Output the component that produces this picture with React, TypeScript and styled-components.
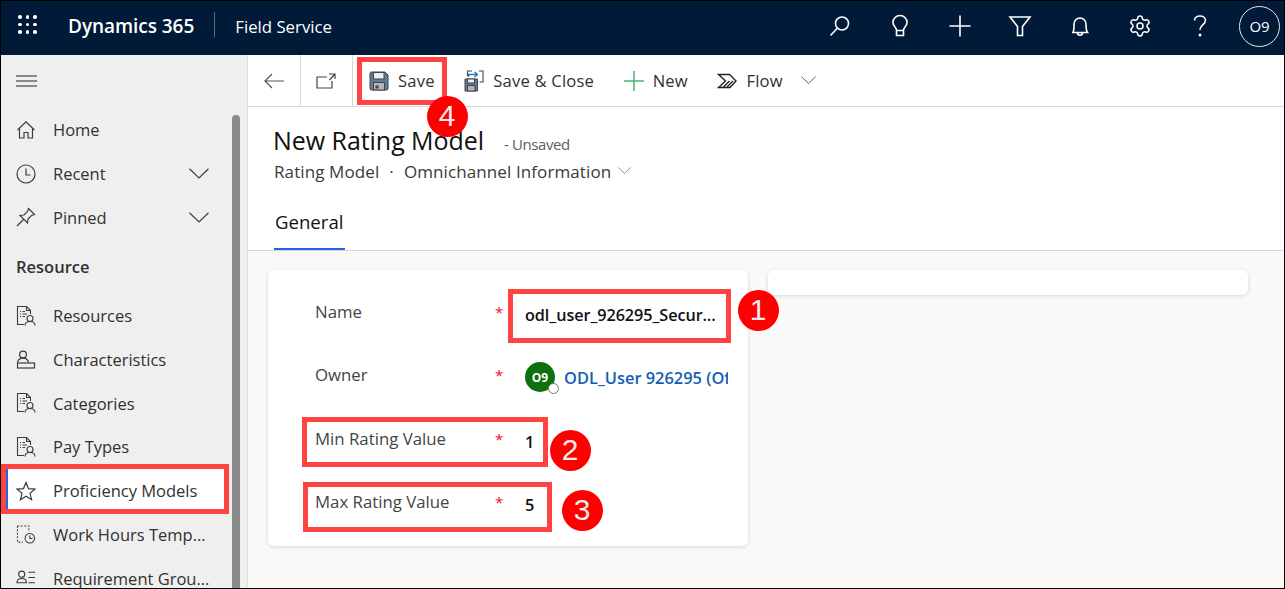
import React from "react";
import styled, { createGlobalStyle } from "styled-components";
import { Settings } from "lucide-react";

const GlobalStyle = createGlobalStyle`
  * { box-sizing: border-box; }
  html, body { margin: 0; padding: 0; background: #fff; }
  body { font-family: "Open Sans", "Noto Sans", sans-serif; overflow: hidden; }
`;

const Frame = styled.div`
  position: relative;
  width: 1285px;
  height: 589px;
  border: 1px solid #000;
  display: flex;
  flex-direction: column;
  overflow: hidden;
  color: #323130;
`;

const TopBar = styled.header`
  height: 54px;
  flex: none;
  padding-bottom: 4px;
  background: #001a38;
  color: #fff;
  display: flex;
  align-items: center;
`;

const Waffle = styled.div`
  width: 19px;
  height: 19px;
  margin: -3px 0 0 17px;
  display: grid;
  grid-template-columns: repeat(3, 3.6px);
  justify-content: space-between;
  align-content: space-between;
  span {
    width: 3.6px;
    height: 3.6px;
    border-radius: 50%;
    background: #fff;
  }
`;

const Brand = styled.div`
  margin-left: 31px;
  font-size: 19px;
  font-weight: 600;
  letter-spacing: -0.05px;
`;

const BrandDivider = styled.div`
  width: 1px;
  height: 25px;
  margin: -4px 20px 0 20px;
  background: #5a6b80;
`;

const AppName = styled.div`
  font-size: 16.8px;
`;

const TopActions = styled.div`
  margin-left: auto;
  margin-right: 4px;
  display: flex;
  align-items: center;
`;

const TopAction = styled.div`
  width: 60px;
  height: 40px;
  display: flex;
  align-items: center;
  justify-content: center;
`;

const UserCircle = styled.div`
  width: 41px;
  height: 41px;
  margin-left: 9px;
  border: 1px solid #e8e8e8;
  border-radius: 50%;
  display: flex;
  align-items: center;
  justify-content: center;
  font-size: 15px;
`;

const Body = styled.div`
  flex: 1;
  display: flex;
  min-height: 0;
`;

const Sidebar = styled.nav`
  position: relative;
  width: 247px;
  flex: none;
  background: #efefef;
  border-right: 1px solid #e1e1e1;
  overflow: hidden;
`;

const Burger = styled.div`
  height: 52px;
  margin-bottom: 1px;
  padding-left: 15px;
  display: flex;
  align-items: center;
`;

const NavRow = styled.div<{ $active?: boolean }>`
  position: relative;
  width: 218px;
  margin-left: 5px;
  height: 43.7px;
  padding-left: 10px;
  display: flex;
  align-items: center;
  font-size: 16.5px;
  white-space: nowrap;
  background: ${({ $active }) => ($active ? "#fff" : "transparent")};
  ${({ $active }) => $active && `box-shadow: inset 2px 0 0 #2266e3;`}
`;

const NavIcon = styled.span`
  width: 20px;
  height: 22px;
  margin-right: 17px;
  flex: none;
  display: flex;
  align-items: center;
  justify-content: center;
`;

const NavChevron = styled.span`
  margin-left: auto;
  margin-right: 15px;
  display: flex;
`;

const GroupTitle = styled.div`
  height: 55px;
  padding-left: 15px;
  display: flex;
  align-items: center;
  font-size: 16.5px;
  font-weight: 600;
`;

const ScrollThumb = styled.div`
  position: absolute;
  top: 60px;
  bottom: -10px;
  left: 231px;
  width: 8px;
  border-radius: 4px 4px 0 0;
  background: #8a8a8a;
`;

const Main = styled.main`
  flex: 1;
  display: flex;
  flex-direction: column;
  min-width: 0;
`;

const Toolbar = styled.div`
  height: 52px;
  flex: none;
  display: flex;
  align-items: stretch;
  border-bottom: 1px solid #d8d8d8;
`;

const NavButton = styled.div`
  width: 52.5px;
  flex: none;
  display: flex;
  align-items: center;
  justify-content: center;
  border-right: 1px solid #d8d8d8;
`;

const Commands = styled.div`
  display: flex;
  align-items: center;
  gap: 29.5px;
  padding-left: 16px;
`;

const Command = styled.div`
  display: flex;
  align-items: center;
  gap: 9px;
  font-size: 16.6px;
  letter-spacing: 0.2px;
  white-space: nowrap;
`;

const CommandCaret = styled.span`
  display: flex;
  margin-left: 9px;
`;

const RecordHeader = styled.div`
  flex: none;
  padding: 16px 0 0 26px;
  border-bottom: 1px solid #d8d8d8;
`;

const TitleLine = styled.div`
  display: flex;
  align-items: baseline;
  height: 34px;
`;

const Title = styled.h1`
  margin: 0 0 0 -1px;
  font-size: 25px;
  line-height: 34px;
  font-weight: 500;
  letter-spacing: -0.05px;
  color: #111;
`;

const TitleState = styled.span`
  margin-left: 20px;
  font-size: 15px;
  letter-spacing: -0.4px;
  color: #605e5c;
`;

const SubLine = styled.div`
  display: flex;
  align-items: center;
  height: 22px;
  margin-top: 3px;
  font-size: 17px;
  font-weight: 500;
  letter-spacing: 0.1px;
  color: #3b3a39;
`;

const Dot = styled.span`
  margin: 0 10px;
`;

const SubCaret = styled.span`
  display: flex;
  margin-left: 7px;
`;

const Tab = styled.div`
  display: block;
  width: 71px;
  margin-top: 20px;
  padding: 7px 1px 13px 1px;
  font-size: 18.6px;
  line-height: 26px;
  font-weight: 500;
  white-space: nowrap;
  color: #111;
  border-bottom: 2px solid #2266e3;
`;

const Workspace = styled.div`
  flex: 1;
  background: #faf9f8;
  padding: 19px 20px;
  display: flex;
  align-items: flex-start;
  gap: 20px;
`;

const Card = styled.section`
  width: 480px;
  background: #fff;
  border-radius: 6px;
  box-shadow: 0 1px 4px rgba(0, 0, 0, 0.14);
`;

const FormCard = styled(Card)`
  height: 276px;
  padding: 30px 20px 0 47px;
`;

const BlankCard = styled(Card)`
  height: 25px;
`;

const FieldRow = styled.div`
  height: 63.4px;
  display: grid;
  grid-template-columns: 180px 30px 203px;
  align-items: start;
`;

const FieldLabel = styled.div`
  font-size: 16.8px;
  line-height: 24px;
  color: #444;
  white-space: nowrap;
`;

const Required = styled.div`
  font-size: 15px;
  line-height: 24px;
  color: #e8112d;
`;

const FieldValue = styled.div`
  margin-top: 3px;
  font-size: 16.2px;
  line-height: 24px;
  font-weight: 600;
  letter-spacing: -0.05px;
  color: #111;
  width: 192px;
  overflow: hidden;
  white-space: nowrap;
  text-overflow: ellipsis;
`;

const OwnerCell = styled.div`
  display: flex;
  align-items: center;
  gap: 9px;
  margin-top: -7px;
  height: 42px;
  overflow: hidden;
  white-space: nowrap;
`;

const Avatar = styled.div`
  position: relative;
  width: 30px;
  height: 30px;
  flex: none;
  border-radius: 50%;
  background: #0e700e;
  color: #fff;
  font-size: 12px;
  font-weight: 700;
  display: flex;
  align-items: center;
  justify-content: center;
`;

const Presence = styled.span`
  position: absolute;
  right: -4px;
  bottom: -2px;
  width: 11px;
  height: 11px;
  border-radius: 50%;
  background: #fff;
  border: 1px solid #777;
`;

const OwnerLink = styled.span`
  font-size: 16.4px;
  font-weight: 600;
  color: #1160b7;
`;

const Callout = styled.div<{ $x: number; $y: number; $w: number; $h: number }>`
  position: absolute;
  left: ${({ $x }) => $x - 1}px;
  top: ${({ $y }) => $y - 1}px;
  width: ${({ $w }) => $w}px;
  height: ${({ $h }) => $h}px;
  border: 5px solid #ff4343;
  pointer-events: none;
`;

const Badge = styled.div<{ $x: number; $y: number }>`
  position: absolute;
  left: ${({ $x }) => $x - 21.5}px;
  top: ${({ $y }) => $y - 21.5}px;
  width: 41px;
  height: 41px;
  border-radius: 50%;
  background: #fe0000;
  color: #ececec;
  font-family: "Liberation Sans", Arial, sans-serif;
  font-size: 30px;
  display: flex;
  align-items: center;
  justify-content: center;
`;

const stroke = "#fff";
const ink = "#3d3c3b";

const TopIcon = ({ children }: { children: React.ReactNode }) => (
  <svg width="24" height="24" viewBox="0 0 24 24" fill="none" stroke={stroke} strokeWidth="1.6">
    {children}
  </svg>
);

const DocUser = () => (
  <svg width="20" height="22" viewBox="0 0 20 22" fill="none" stroke={ink} strokeWidth="1.1">
    <path d="M8 19.5H1.5V1.5H10.5L14.5 5.5V9" />
    <path d="M10.5 1.5V5.5H14.5" />
    <path d="M4 6.5H5M4 9H5M4 11.5H5M6.5 6.5H9M6.5 9H11M6.5 11.5H9" />
    <circle cx="14" cy="13.5" r="3" />
    <path d="M9 20.5C9 17.8 11 16.5 14 16.5S19 17.8 19 20.5" />
  </svg>
);

const Chevron = ({ size = 20, color = ink }: { size?: number; color?: string }) => (
  <svg width={size} height={size * 0.55} viewBox="0 0 20 11" fill="none" stroke={color} strokeWidth="1.2">
    <path d="M0.5 0.8L10 10L19.5 0.8" />
  </svg>
);

const navTop = [
  {
    label: "Home",
    icon: (
      <svg width="20" height="20" viewBox="0 0 20 20" fill="none" stroke={ink} strokeWidth="1.2">
        <path d="M1.5 10L10 1.8L18.5 10M3.5 8.5V18H8V12.5H12V18H16.5V8.5" />
      </svg>
    ),
  },
  {
    label: "Recent",
    chevron: true,
    icon: (
      <svg width="20" height="20" viewBox="0 0 20 20" fill="none" stroke={ink} strokeWidth="1.2">
        <circle cx="10" cy="10" r="9" />
        <path d="M10 4.5V11H14.5" />
      </svg>
    ),
  },
  {
    label: "Pinned",
    chevron: true,
    icon: (
      <svg width="20" height="20" viewBox="0 0 20 20" fill="none" stroke={ink} strokeWidth="1.2">
        <path d="M12.5 1.5L18.5 7.5L15.5 8.5L12 12L11.5 16L4 8.5L8 8L11.5 4.5Z" />
        <path d="M7.5 12.5L1 19" />
      </svg>
    ),
  },
];

const navResource = [
  { label: "Resources", icon: <DocUser /> },
  {
    label: "Characteristics",
    icon: (
      <svg width="20" height="20" viewBox="0 0 20 20" fill="none" stroke={ink} strokeWidth="1.2">
        <circle cx="7" cy="4.5" r="3.4" />
        <path d="M1.5 12.5C2 9.5 4 8.2 7 8.2S12 9.5 12.5 12.5" />
        <rect x="1.5" y="13" width="17" height="5" />
      </svg>
    ),
  },
  { label: "Categories", icon: <DocUser /> },
  { label: "Pay Types", icon: <DocUser /> },
  {
    label: "Proficiency Models",
    active: true,
    icon: (
      <svg width="20" height="20" viewBox="0 0 20 20" fill="none" stroke={ink} strokeWidth="1.2">
        <path d="M10 1.5L12.5 7.6L19 8.1L14 12.3L15.6 18.7L10 15.2L4.4 18.7L6 12.3L1 8.1L7.5 7.6Z" />
      </svg>
    ),
  },
  {
    label: "Work Hours Temp...",
    icon: (
      <svg width="21" height="21" viewBox="0 0 21 21" fill="none" stroke={ink} strokeWidth="1.1">
        <path d="M1.5 1.5H13.5V8M1.5 1.5V18.5H7" strokeDasharray="2 1.6" />
        <circle cx="14.5" cy="14.5" r="5" />
        <path d="M14.5 11.5V14.8H17.5" />
      </svg>
    ),
  },
  {
    label: "Requirement Grou...",
    icon: (
      <svg width="21" height="18" viewBox="0 0 21 18" fill="none" stroke={ink} strokeWidth="1.2">
        <circle cx="6" cy="5" r="3.2" />
        <path d="M1 14C1 10.8 3 9.5 6 9.5S11 10.8 11 14H1Z" />
        <path d="M13 3H20M13 8.5H20M13 14H20" />
      </svg>
    ),
  },
];

const App = () => (
  <Frame>
    <GlobalStyle />
    <TopBar>
      <Waffle>
        {Array.from({ length: 9 }).map((_, i) => (
          <span key={i} />
        ))}
      </Waffle>
      <Brand>Dynamics 365</Brand>
      <BrandDivider />
      <AppName>Field Service</AppName>
      <TopActions>
        <TopAction>
          <TopIcon>
            <circle cx="14" cy="9.5" r="6.5" />
            <path d="M9.5 14L2.5 21.5" />
          </TopIcon>
        </TopAction>
        <TopAction>
          <TopIcon>
            <path d="M8.5 16C8 13 5 12 5 8.5A7 7 0 0 1 19 8.5C19 12 16 13 15.5 16V21.5H8.5V16ZM8.5 16.5H15.5" />
          </TopIcon>
        </TopAction>
        <TopAction>
          <TopIcon>
            <path d="M12 1.5V22.5M1.5 12H22.5" />
          </TopIcon>
        </TopAction>
        <TopAction>
          <TopIcon>
            <path d="M2 3H22L14.5 12.5V21.5H9.5V12.5Z" />
          </TopIcon>
        </TopAction>
        <TopAction>
          <TopIcon>
            <path d="M5 18.5C6 16.5 6 14 6 10A6 6 0 0 1 18 10C18 14 18 16.5 19.5 18.5H4ZM9.5 19C9.5 22 14.5 22 14.5 19" />
          </TopIcon>
        </TopAction>
        <TopAction>
          <Settings size={24} strokeWidth={1.5} color={stroke} />
        </TopAction>
        <TopAction>
          <TopIcon>
            <path d="M6.5 6.5C6.5 0.5 17.5 0.5 17.5 6.5C17.5 10.5 12 11 12 16" />
            <circle cx="12" cy="21" r="0.7" fill={stroke} />
          </TopIcon>
        </TopAction>
        <UserCircle>O9</UserCircle>
      </TopActions>
    </TopBar>

    <Body>
      <Sidebar>
        <Burger>
          <svg width="21" height="12" viewBox="0 0 21 12" fill="none" stroke="#222" strokeWidth="1">
            <path d="M0 1H21M0 6H21M0 11H21" />
          </svg>
        </Burger>
        {navTop.map((item) => (
          <NavRow key={item.label}>
            <NavIcon>{item.icon}</NavIcon>
            {item.label}
            {item.chevron && (
              <NavChevron>
                <Chevron />
              </NavChevron>
            )}
          </NavRow>
        ))}
        <GroupTitle>Resource</GroupTitle>
        {navResource.map((item) => (
          <NavRow key={item.label} $active={item.active}>
            <NavIcon>{item.icon}</NavIcon>
            {item.label}
          </NavRow>
        ))}
        <ScrollThumb />
      </Sidebar>

      <Main>
        <Toolbar>
          <NavButton>
            <svg width="20" height="16" viewBox="0 0 20 16" fill="none" stroke="#555" strokeWidth="1.2">
              <path d="M8 1L1 8L8 15M1 8H20" />
            </svg>
          </NavButton>
          <NavButton>
            <svg width="20" height="16" viewBox="0 0 20 16" fill="none" stroke="#444" strokeWidth="1.2">
              <path d="M11 4H1V15H16V8M13 1H19V6M19 1L13.5 7" />
            </svg>
          </NavButton>
          <Commands>
            <Command>
              <svg width="20" height="20" viewBox="0 0 20 20">
                <path d="M1 2.5A1.5 1.5 0 0 1 2.5 1H16L19 4V17.5A1.5 1.5 0 0 1 17.5 19H2.5A1.5 1.5 0 0 1 1 17.5Z" fill="#5c7d9c" stroke="#444" />
                <rect x="4.5" y="1.5" width="10.5" height="6.5" fill="#e8eef3" stroke="#444" />
                <rect x="4.5" y="11.5" width="11" height="7.5" fill="#b5b5b5" stroke="#444" />
                <rect x="6.5" y="14.5" width="3" height="3" fill="#444" />
              </svg>
              Save
            </Command>
            <Command>
              <svg width="20" height="22" viewBox="0 0 20 22">
                <path d="M1 9H13.5V21H1Z" fill="#5c7d9c" stroke="#444" />
                <rect x="3.5" y="9" width="7" height="4" fill="#e8eef3" stroke="#444" />
                <rect x="3.5" y="15.5" width="7.5" height="5.5" fill="#b5b5b5" stroke="#444" />
                <path d="M4.5 7V4.5H13M10.5 2L13.5 4.5L10.5 7" fill="none" stroke="#2b79c2" strokeWidth="1.4" />
                <path d="M8 1H3.5V6M15 1H19V12H15.5" fill="none" stroke="#444" strokeWidth="1.1" />
              </svg>
              Save & Close
            </Command>
            <Command>
              <svg width="20" height="20" viewBox="0 0 20 20" fill="none" stroke="#4db27a" strokeWidth="1.5">
                <path d="M10 0V20M0 10H20" />
              </svg>
              New
            </Command>
            <Command>
              <svg width="20" height="16" viewBox="0 0 20 16" fill="none" stroke="#222" strokeWidth="1.4">
                <path d="M1.5 1.5H12.5L19 8L13 14.5H1.5L8.5 8Z" />
                <path d="M6.5 14L12.5 8M10 14L16 8" />
              </svg>
              Flow
              <CommandCaret>
                <Chevron size={15} color="#555" />
              </CommandCaret>
            </Command>
          </Commands>
        </Toolbar>

        <RecordHeader>
          <TitleLine>
            <Title>New Rating Model</Title>
            <TitleState>- Unsaved</TitleState>
          </TitleLine>
          <SubLine>
            Rating Model
            <Dot>·</Dot>
            Omnichannel Information
            <SubCaret>
              <Chevron size={13} color="#777" />
            </SubCaret>
          </SubLine>
          <Tab>General</Tab>
        </RecordHeader>

        <Workspace>
          <FormCard>
            <FieldRow>
              <FieldLabel>Name</FieldLabel>
              <Required>*</Required>
              <FieldValue>odl_user_926295_SecurityRating</FieldValue>
            </FieldRow>
            <FieldRow>
              <FieldLabel>Owner</FieldLabel>
              <Required>*</Required>
              <OwnerCell>
                <Avatar>
                  O9
                  <Presence />
                </Avatar>
                <OwnerLink>ODL_User 926295 (Offline)</OwnerLink>
              </OwnerCell>
            </FieldRow>
            <FieldRow>
              <FieldLabel>Min Rating Value</FieldLabel>
              <Required>*</Required>
              <FieldValue>1</FieldValue>
            </FieldRow>
            <FieldRow>
              <FieldLabel>Max Rating Value</FieldLabel>
              <Required>*</Required>
              <FieldValue>5</FieldValue>
            </FieldRow>
          </FormCard>
          <BlankCard />
        </Workspace>
      </Main>
    </Body>

    <Callout $x={357} $y={57} $w={90} $h={48} />
    <Callout $x={1} $y={464} $w={228} $h={50} />
    <Callout $x={508} $y={289} $w={223} $h={54} />
    <Callout $x={302} $y={417} $w={246} $h={50} />
    <Callout $x={303} $y={482} $w={249} $h={50} />
    <Badge $x={447} $y={116}>4</Badge>
    <Badge $x={758} $y={310}>1</Badge>
    <Badge $x={570} $y={450}>2</Badge>
    <Badge $x={582} $y={510}>3</Badge>
  </Frame>
);

export default App;
